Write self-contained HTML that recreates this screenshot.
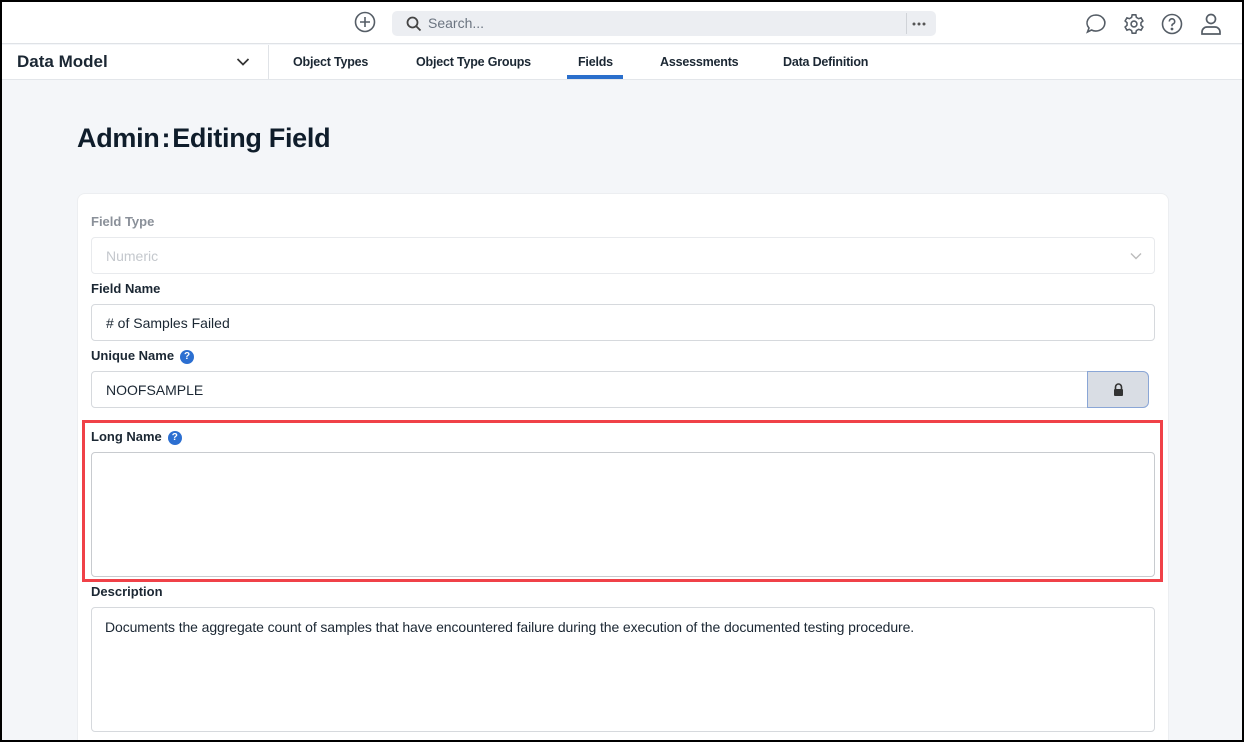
<!DOCTYPE html>
<html><head><style>
*{box-sizing:border-box;margin:0;padding:0}
body{width:1244px;height:742px;overflow:hidden;background:#000;font-family:"Liberation Sans",sans-serif;color:#1b2733}
.frame{position:absolute;left:2px;top:2px;width:1240px;height:738px;background:#f4f6f9;overflow:hidden}
.top{position:absolute;left:0;top:0;width:1240px;height:42px;background:#fff;border-bottom:1px solid #dfe2e6}
.search{position:absolute;left:390px;top:9px;width:544px;height:25px;background:#eceef2;border-radius:5px;font-size:14px;color:#6b7480}
.nav{position:absolute;left:0;top:43px;width:1240px;height:35px;background:#fff;border-bottom:1px solid #e3e6ea}
.nav span{position:absolute;top:10px;font-size:12.5px;font-weight:bold;color:#1b2733;letter-spacing:-0.2px}
.card{position:absolute;left:75px;top:191px;width:1092px;height:547px;background:#fff;border-radius:8px 8px 0 0;border:1px solid #eceef1;border-bottom:none}
.lbl{position:absolute;left:89px;font-size:13px;font-weight:bold;color:#1b2733}
.inp{position:absolute;left:89px;width:1064px;height:37px;border:1px solid #d6d9dd;border-radius:4px;background:#fff;font-size:14px;padding:10px 14px;color:#1b2733}
.q{display:inline-block;width:14px;height:14px;border-radius:50%;background:#2c6fd1;color:#fff;font-size:10px;text-align:center;line-height:14px;margin-left:6px;vertical-align:1px}
svg{position:absolute}
</style></head><body><div class="frame">
<div class="top">
<svg style="left:352px;top:9px" width="22" height="22" viewBox="0 0 22 22" fill="none" stroke="#555d66" stroke-width="1.6"><circle cx="11" cy="11" r="9.5"/><path d="M11 6v10M6 11h10"/></svg>
<div class="search"><svg style="left:14px;top:5px" width="16" height="16" viewBox="0 0 16 16" fill="none" stroke="#444" stroke-width="1.8"><circle cx="6.5" cy="6.5" r="5"/><path d="M10 10l4.5 4.5"/></svg><span style="position:absolute;left:36px;top:4px">Search...</span><div style="position:absolute;left:514px;top:2px;width:1px;height:21px;background:#d0d3d8"></div><svg style="left:520px;top:11px" width="14" height="4" viewBox="0 0 14 4" fill="#555"><circle cx="2" cy="2" r="1.5"/><circle cx="7" cy="2" r="1.5"/><circle cx="12" cy="2" r="1.5"/></svg></div>
<svg style="left:1083px;top:11px" width="22" height="22" viewBox="0 0 22 22" fill="none" stroke="#555d66" stroke-width="1.6"><path d="M11 2a9 8 0 1 1-4.5 15L2.5 19l1.5-4A9 8 0 0 1 11 2z"/></svg>
<svg style="left:1121px;top:11px" width="22" height="22" viewBox="0 0 24 24" fill="none" stroke="#555d66" stroke-width="1.7"><circle cx="12" cy="12" r="3.2"/><path d="M10 2h4l.6 2.8 2.4 1.4 2.7-.9 2 3.4-2.1 1.9v2.8l2.1 1.9-2 3.4-2.7-.9-2.4 1.4L14 22h-4l-.6-2.8-2.4-1.4-2.7.9-2-3.4 2.1-1.9v-2.8L2.3 8.7l2-3.4 2.7.9 2.4-1.4z"/></svg>
<svg style="left:1159px;top:11px" width="22" height="22" viewBox="0 0 22 22" fill="none" stroke="#555d66" stroke-width="1.6"><circle cx="11" cy="11" r="9.5"/><path d="M8.3 8.5a2.7 2.7 0 1 1 3.7 2.5c-.7.3-1 .8-1 1.5v.8"/><circle cx="11" cy="16" r=".6" fill="#555d66"/></svg>
<svg style="left:1198px;top:10px" width="22" height="24" viewBox="0 0 22 24" fill="none" stroke="#555d66" stroke-width="1.7"><circle cx="11" cy="7" r="4.5"/><path d="M2 22v-2a5 5 0 0 1 5-5h8a5 5 0 0 1 5 5v2z"/></svg>
</div>
<div class="nav">
<span style="left:15px;top:7px;font-size:17px;font-weight:bold;letter-spacing:0">Data Model</span>
<svg style="left:234px;top:12px" width="14" height="10" viewBox="0 0 14 10" fill="none" stroke="#333" stroke-width="1.7"><path d="M1.5 2l5.5 5.5L12.5 2"/></svg>
<div style="position:absolute;left:266px;top:0;width:1px;height:34px;background:#e0e3e7"></div>
<span style="left:291px">Object Types</span><span style="left:414px">Object Type Groups</span><span style="left:576px">Fields</span><span style="left:658px">Assessments</span><span style="left:781px">Data Definition</span>
<div style="position:absolute;left:565px;top:30px;width:56px;height:4px;background:#2a6fcc"></div>
</div>
<div style="position:absolute;left:75px;top:121px;font-size:27px;font-weight:bold;color:#0f1d2b;letter-spacing:-0.3px">Admin<span style="margin:0 2px">:</span>Editing Field</div>
<div class="card"></div>
<div class="lbl" style="top:212px;color:#8a9099">Field Type</div>
<div class="inp" style="top:235px;border-color:#e8eaed;color:#c4c8cd">Numeric<svg style="left:1038px;top:14px" width="12" height="8" viewBox="0 0 12 8" fill="none" stroke="#bbb" stroke-width="1.4"><path d="M1 1.5l5 5 5-5"/></svg></div>
<div class="lbl" style="top:279px">Field Name</div>
<div class="inp" style="top:302px"># of Samples Failed</div>
<div class="lbl" style="top:346px">Unique Name<span class="q">?</span></div>
<div class="inp" style="top:369px;width:998px;border-radius:4px 0 0 4px">NOOFSAMPLE</div>
<div style="position:absolute;left:1085px;top:369px;width:62px;height:37px;background:#d9dde4;border:1px solid #8aa6d6;border-radius:0 6px 6px 0"><svg style="left:25px;top:11px" width="11" height="13" viewBox="0 0 11 13"><path d="M2.5 6V4a3 3 0 0 1 6 0v2" fill="none" stroke="#333" stroke-width="1.6"/><rect x="1" y="6" width="9" height="7" rx="1" fill="#333"/></svg></div>
<div style="position:absolute;left:80px;top:418px;width:1081px;height:162px;border:3px solid #f04148"></div>
<div class="lbl" style="top:427px">Long Name<span class="q">?</span></div>
<div class="inp" style="top:450px;height:125px;border-color:#c8cbcf"></div>
<div class="lbl" style="top:582px">Description</div>
<div class="inp" style="top:605px;height:125px;font-size:14px;padding:11px 13px;letter-spacing:-0.1px">Documents the aggregate count of samples that have encountered failure during the execution of the documented testing procedure.</div>
</div></body></html>
